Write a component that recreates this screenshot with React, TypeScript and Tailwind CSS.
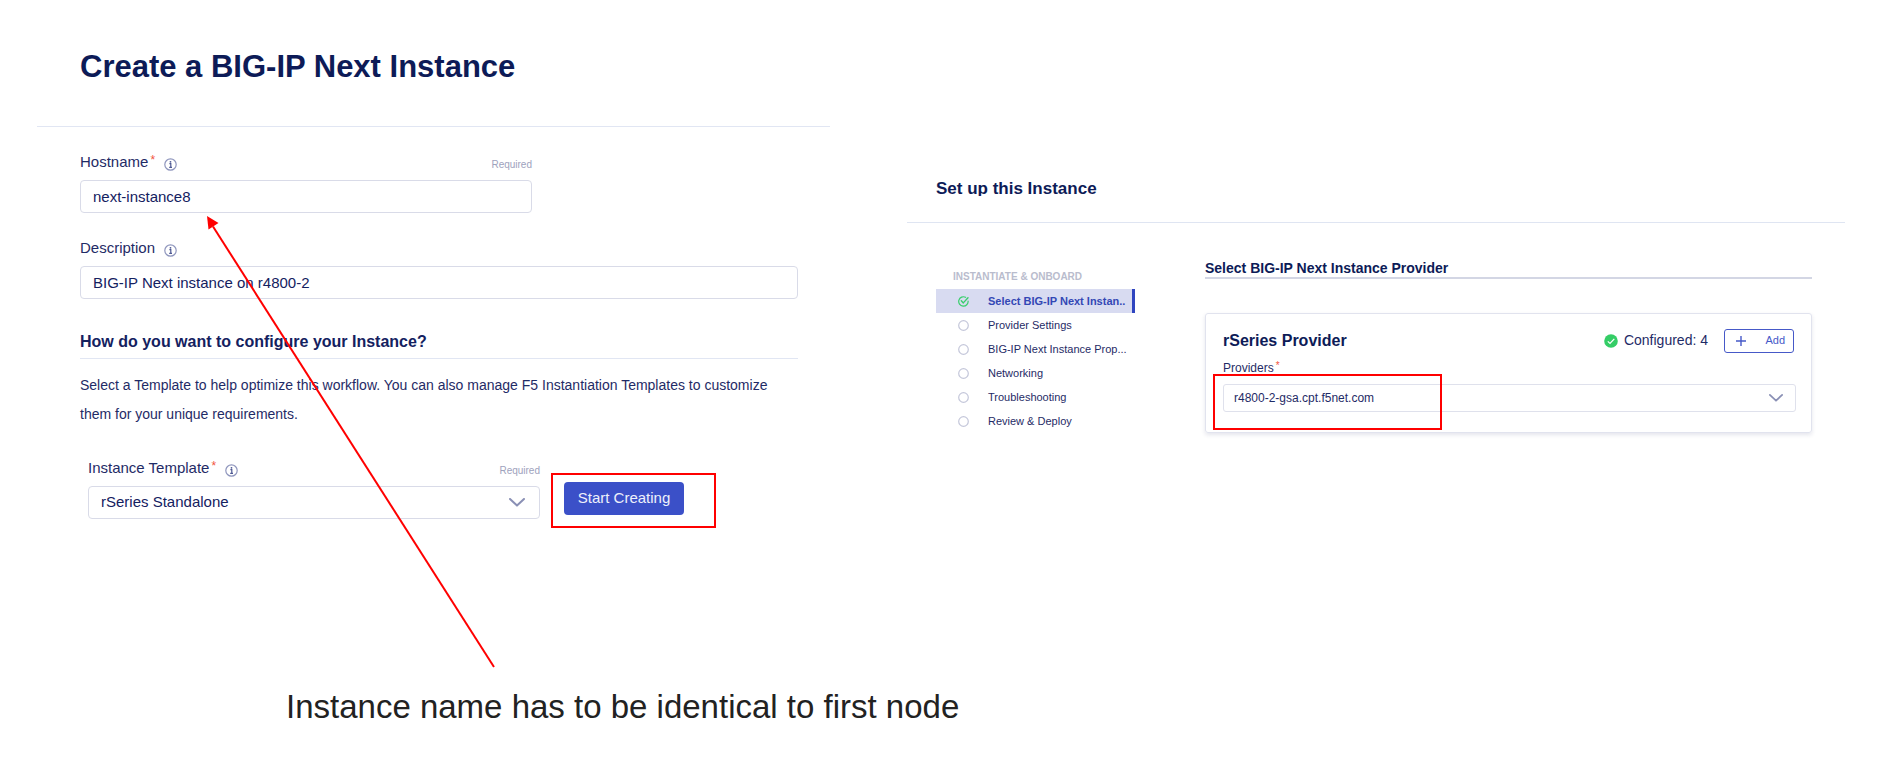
import React from "react";

const fieldClass =
  "h-[33px] w-full appearance-none rounded-[4px] border border-[#d9dbe8] bg-white px-3 text-[15px] text-[#14215f] outline-none";

function InfoIcon() {
  return (
    <svg className="mt-1 size-[13px]" viewBox="0 0 13 13" fill="none" aria-hidden="true">
      <circle cx="6.5" cy="6.5" r="5.7" stroke="#8f96bd" strokeWidth="1.2" />
      <circle cx="6.5" cy="3.8" r="0.9" fill="#4d5893" />
      <path d="M5.4 5.7H6.8V9.2M5.2 9.3H8" stroke="#4d5893" strokeWidth="1.2" />
    </svg>
  );
}

function Chevron({ className }: { className: string }) {
  return (
    <svg className={className} viewBox="0 0 16 9" fill="none" aria-hidden="true">
      <path d="M1 1L8 7.6L15 1" stroke="#8a90b5" strokeWidth="2" strokeLinecap="round" strokeLinejoin="round" />
    </svg>
  );
}

function FieldLabel({ id, text, required }: { id: string; text: string; required?: boolean }) {
  return (
    <div className="flex h-[22px] items-center gap-[9px]">
      <label htmlFor={id} className="flex text-[15px] leading-[22px]">
        {text}
        {required && <span className="ml-[2px] text-[12px] leading-[18px] text-[#f2553d]">*</span>}
      </label>
      <InfoIcon />
      {required && <span className="ml-auto mt-1 text-[10px] text-[#9ea2bd]">Required</span>}
    </div>
  );
}

function CreateInstance() {
  return (
    <section className="relative min-w-0 pt-[47px]">
      <h1 className="pl-[43px] text-[31px] leading-[40px] font-bold text-[#0d1b57]">Create a BIG-IP Next Instance</h1>
      <hr className="mt-[39px] border-[#e1e6f3]" />
      <form className="pr-8 pl-[43px]" onSubmit={(e) => e.preventDefault()}>
        <div className="mt-6 flex max-w-[452px] flex-col gap-[7px]">
          <FieldLabel id="hostname" text="Hostname" required />
          <input id="hostname" className={fieldClass} defaultValue="next-instance8" />
        </div>
        <div className="mt-6 flex flex-col gap-[7px]">
          <FieldLabel id="description" text="Description" />
          <input id="description" className={fieldClass} defaultValue="BIG-IP Next instance on r4800-2" />
        </div>
        <h2 className="mt-[31px] border-b border-[#e1e6f3] pb-1 text-[16px] leading-6 font-bold text-[#14215f]">
          How do you want to configure your Instance?
        </h2>
        <p className="mt-3 text-[14px] leading-[29px]">
          Select a Template to help optimize this workflow. You can also manage F5 Instantiation Templates to customize
          them for your unique requirements.
        </p>
        <div className="mt-7 ml-2 flex items-end gap-[11px]">
          <div className="flex w-[452px] flex-col gap-[7px]">
            <FieldLabel id="template" text="Instance Template" required />
            <div className="relative">
              <select id="template" className={fieldClass}>
                <option>rSeries Standalone</option>
              </select>
              <Chevron className="pointer-events-none absolute top-3 right-[15px] h-[9px] w-4" />
            </div>
          </div>
          <div className="-mb-[9px] border-2 border-[#ff0000] pt-[7px] pr-[30px] pb-[11px] pl-[11px]">
            <button className="h-[33px] w-[120px] rounded-[4px] bg-[#3b50c8] text-[15px] whitespace-nowrap text-[#eef0fb]">
              Start Creating
            </button>
          </div>
        </div>
      </form>
      <svg
        className="pointer-events-none absolute top-[216px] left-[169px] h-[452px] w-[290px]"
        viewBox="0 0 290 452"
        fill="none"
        aria-hidden="true"
      >
        <path d="M7 10.5L288 451" stroke="#ff0000" strokeWidth="2" />
        <path d="M1 0L12.5 7L2.5 13.5Z" fill="#ff0000" />
      </svg>
      <p className="mt-[163px] pl-[249px] text-[33px] leading-[50px] whitespace-nowrap text-[#222222]">
        Instance name has to be identical to first node
      </p>
    </section>
  );
}

const steps = [
  { label: "Select BIG-IP Next Instan..", active: true },
  { label: "Provider Settings" },
  { label: "BIG-IP Next Instance Prop..." },
  { label: "Networking" },
  { label: "Troubleshooting" },
  { label: "Review & Deploy" },
];

function StepIcon({ done }: { done?: boolean }) {
  return (
    <svg className="size-[11px] shrink-0" viewBox="0 0 11 11" fill="none" aria-hidden="true">
      {done ? (
        <>
          <path d="M10.1 5A4.7 4.7 0 1 1 7.6 1.3" stroke="#37cf6b" strokeWidth="1.2" strokeLinecap="round" />
          <path d="M3.3 4.8L5.3 6.9L10 1.8" stroke="#37cf6b" strokeWidth="1.4" strokeLinecap="round" strokeLinejoin="round" />
        </>
      ) : (
        <circle cx="5.5" cy="5.5" r="4.8" stroke="#c4c7da" strokeWidth="1.2" />
      )}
    </svg>
  );
}

function SetUpInstance() {
  return (
    <section className="min-w-0 pt-[176px]">
      <h1 className="h-5 overflow-hidden pl-[29px] text-[17px] leading-[26px] font-bold text-[#0d1b57]">
        Set up this Instance
      </h1>
      <hr className="mt-[26px] border-[#dfe5f2]" />
      <div className="flex gap-[70px] pr-[33px] pl-[29px]">
        <nav className="w-[199px] shrink-0 pt-[46px]">
          <h2 className="mb-1 pl-[17px] text-[10px] leading-4 font-bold text-[#b9bccd]">INSTANTIATE &amp; ONBOARD</h2>
          <ul>
            {steps.map((step) => (
              <li key={step.label}>
                <a
                  href="#"
                  className={
                    step.active
                      ? "flex h-6 items-center gap-[19px] border-r-[3px] border-[#2f45c0] bg-[#d8dbf1] pl-[22px] text-[11px] font-bold whitespace-nowrap text-[#3347b5]"
                      : "flex h-6 items-center gap-[19px] pl-[22px] text-[11px] whitespace-nowrap"
                  }
                >
                  <StepIcon done={step.active} />
                  {step.label}
                </a>
              </li>
            ))}
          </ul>
        </nav>
        <div className="min-w-0 flex-1 pt-[37px]">
          <h2 className="border-b-2 border-[#d3d6e4] text-[14px] leading-[17px] font-bold text-[#0d1b57]">
            Select BIG-IP Next Instance Provider
          </h2>
          <div className="mt-[34px] rounded-[3px] border border-[#e1e3ee] px-[17px] pt-[14px] pb-5 shadow-[0_2px_4px_rgba(30,40,100,0.12)]">
            <div className="flex h-[25px] items-center">
              <h3 className="text-[16px] leading-[25px] font-bold text-[#0d1b57]">rSeries Provider</h3>
              <svg className="ml-auto size-[14px]" viewBox="0 0 14 14" fill="none" aria-hidden="true">
                <circle cx="7" cy="7" r="6.8" fill="#34cd66" />
                <path d="M3.8 7.4L6 9.5L10.3 4.8" stroke="#ffffff" strokeWidth="1.2" />
              </svg>
              <span className="mr-4 ml-[6px] text-[14px] leading-[25px]">Configured: 4</span>
              <button className="flex h-6 w-[70px] items-center justify-between rounded-[3px] border border-[#4659c8] pr-2 pl-[11px] text-[11px] text-[#4659c8]">
                <svg className="size-[10px]" viewBox="0 0 10 10" fill="none" aria-hidden="true">
                  <path d="M5 0V10M0 5H10" stroke="#4659c8" strokeWidth="1.4" />
                </svg>
                Add
              </button>
            </div>
            <label htmlFor="providers" className="mt-[6px] flex text-[12px] leading-[18px]">
              Providers<span className="ml-[2px] text-[10px] leading-[14px] text-[#f2553d]">*</span>
            </label>
            <div className="relative -mr-[2px] mt-[7px]">
              <select
                id="providers"
                className="h-7 w-full appearance-none rounded-[3px] border border-[#dfe1ec] bg-white px-[10px] text-[12px] outline-none"
              >
                <option>r4800-2-gsa.cpt.f5net.com</option>
              </select>
              <Chevron className="pointer-events-none absolute top-[10px] right-[13px] h-2 w-[14px]" />
              <div className="pointer-events-none absolute -top-[10px] -left-[10px] h-[56px] w-[229px] border-2 border-[#ff0000]" />
            </div>
          </div>
        </div>
      </div>
    </section>
  );
}

export default function App() {
  return (
    <main className="grid grid-cols-[minmax(0,793fr)_minmax(0,938fr)] gap-x-[77px] bg-white px-[37px] pb-8 font-['Liberation_Sans',Arial,sans-serif] text-[#1f2b66]">
      <CreateInstance />
      <SetUpInstance />
    </main>
  );
}
